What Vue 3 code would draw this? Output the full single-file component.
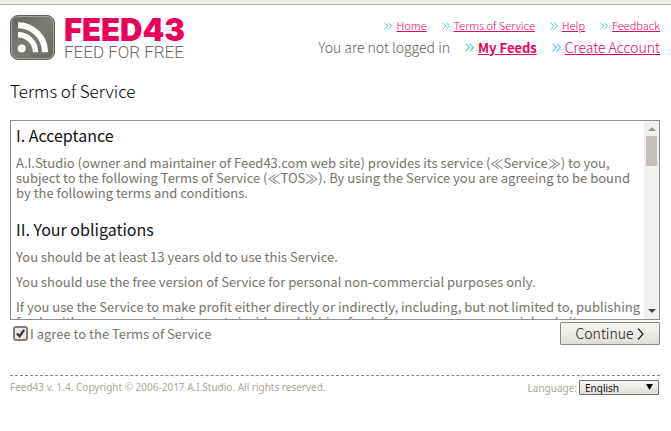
<script setup>
import { ref } from 'vue'

const agreed = ref(true)
const language = ref('English')
const siteLinks = ['Home', 'Terms of Service', 'Help', 'Feedback']
</script>

<template>
  <div class="page">
    <div class="strip"></div>
    <header class="header">
      <a class="logo" href="#" aria-label="Feed43">
        <svg class="logo-icon" width="46" height="46" viewBox="0 0 46 46" aria-hidden="true">
          <defs>
            <linearGradient id="tile" x1="0" y1="0" x2="1" y2="1">
              <stop offset="0" stop-color="#66645e" />
              <stop offset="0.5" stop-color="#7d7b75" />
              <stop offset="1" stop-color="#67655f" />
            </linearGradient>
          </defs>
          <rect x="0.5" y="0.5" width="44" height="44" rx="7.5" fill="url(#tile)" stroke="#64625d" />
          <rect x="1.5" y="1.5" width="42" height="42" rx="6.5" fill="none" stroke="#a3a19c" />
          <circle cx="11.7" cy="33.5" r="4" fill="#fff" />
          <path d="M8 19.7A17.500 17.500 0 0 1 25.500 37.200" fill="none" stroke="#fff" stroke-width="5.400" />
          <path d="M8 10.200A27 27 0 0 1 35 37.200" fill="none" stroke="#fff" stroke-width="6" />
        </svg>
        <span class="logo-text">
          <span class="logo-name">FEED43</span>
          <span class="logo-tag">FEED FOR FREE</span>
        </span>
      </a>
      <nav class="menus">
        <div class="menu small">
          <span v-for="link in siteLinks" :key="link" class="item">
            <svg class="mark" width="8" height="8" viewBox="0 0 8 8" aria-hidden="true"><path d="M0.500 0.500L4 4L0.500 7.500M4 0.500L7.500 4L4 7.500" /></svg>
            <a href="#">{{ link }}</a>
          </span>
        </div>
        <div class="menu account">
          <span>You are not logged in</span>
          <span class="item">
            <svg class="mark" width="9" height="9" viewBox="0 0 8 8" aria-hidden="true"><path d="M0.500 0.500L4 4L0.500 7.500M4 0.500L7.500 4L4 7.500" /></svg>
            <a class="strong" href="#">My Feeds</a>
          </span>
          <span class="item">
            <svg class="mark" width="9" height="9" viewBox="0 0 8 8" aria-hidden="true"><path d="M0.500 0.500L4 4L0.500 7.500M4 0.500L7.500 4L4 7.500" /></svg>
            <a href="#">Create Account</a>
          </span>
        </div>
      </nav>
    </header>

    <main class="main">
      <h1>Terms of Service</h1>
      <form @submit.prevent>
        <div class="terms">
          <div class="terms-text">
            <h2>I. Acceptance</h2>
            <p>
              A.I.Studio (owner and maintainer of Feed43.com web site) provides its service (≪Service≫) to you,<br />
              subject to the following Terms of Service (≪TOS≫). By using the Service you are agreeing to be bound<br />
              by the following terms and conditions.
            </p>
            <h2>II. Your obligations</h2>
            <p>You should be at least 13 years old to use this Service.</p>
            <p>You should use the free version of Service for personal non-commercial purposes only.</p>
            <p>
              If you use the Service to make profit either directly or indirectly, including, but not limited to, publishing<br />
              feeds with your own advertisements inside, publishing feeds for your own commercial website,
            </p>
          </div>
          <div class="scrollbar" aria-hidden="true">
            <svg width="8" height="4" viewBox="0 0 8 4"><path d="M0 4L4 0L8 4Z" fill="#98968f" /></svg>
            <span class="thumb"></span>
            <svg class="down" width="8" height="4" viewBox="0 0 8 4"><path d="M0 0H8L4 4Z" fill="#454545" /></svg>
          </div>
        </div>
        <div class="actions">
          <label class="agree">
            <input v-model="agreed" type="checkbox" />
            <span class="box"><svg v-if="agreed" width="9" height="9" viewBox="0 0 10 10" aria-hidden="true"><path d="M1 5L4 8L9 1" fill="none" stroke="#333" stroke-width="2.500" /></svg></span>
            <span>I agree to the Terms of Service</span>
          </label>
          <button type="submit">Continue
            <svg width="7" height="12" viewBox="0 0 7 12" aria-hidden="true"><path d="M1 0.500L6 6L1 11.500" fill="none" stroke="#222" stroke-width="1.200" /></svg>
          </button>
        </div>
      </form>
    </main>

    <footer class="footer">
      <span class="copyright">Feed43 v. 1.4. Copyright © 2006-2017 A.I.Studio. All rights reserved.</span>
      <div class="language">
        <label for="language">Language:</label>
        <span class="select">
          <select id="language" v-model="language">
            <option>English</option>
          </select>
          <svg width="7" height="6" viewBox="0 0 7 6" aria-hidden="true"><path d="M0 0H7L3.500 6Z" /></svg>
        </span>
      </div>
    </footer>
  </div>
</template>

<style>
body {
  background: #fff;
}
</style>

<style scoped>
.page {
  color: #75736c;
  font: 400 13px/15px "Noto Sans CJK KR", "Noto Sans", sans-serif;
}
.strip {
  height: 4px;
  border-bottom: 1px solid #b5b1aa;
  background: #f1efeb;
}
.header {
  display: flex;
  justify-content: space-between;
  padding: 10px 11px 0 10px;
}
.logo {
  display: flex;
  gap: 8px;
  color: inherit;
  text-decoration: none;
}
.logo-text {
  display: flex;
  flex-direction: column;
  padding-top: 1px;
  white-space: nowrap;
}
.logo-name {
  color: #e8005a;
  font: 900 31px/28px Inter, sans-serif;
}
.logo-tag {
  color: #6b6962;
  font: 300 17px/17px Roboto, sans-serif;
}
.menus {
  display: flex;
  flex-direction: column;
  align-items: flex-end;
  gap: 7px;
  padding-top: 3px;
}
.menu {
  display: flex;
  gap: 15px;
  white-space: nowrap;
}
.small {
  font-size: 11px;
  font-weight: 300;
}
.account {
  color: #5f5d56;
  font-size: 14px;
  font-weight: 300;
}
.item {
  display: flex;
  align-items: center;
  gap: 4px;
}
.mark {
  fill: none;
  stroke: #5bc8c8;
}
.menu a {
  color: #e8005a;
}
.menu .strong {
  font-size: 13px;
  font-weight: 700;
}
.main {
  padding: 0 11px 0 10px;
}
h1 {
  margin: 20px 0 19px;
  color: #000;
  font-size: 17px;
  font-weight: 300;
  line-height: 20px;
}
.terms {
  display: flex;
  height: 198px;
  border: 1px solid #918f87;
  overflow: hidden;
}
.terms-text {
  flex: 1;
  min-width: 0;
  padding: 4px 5px;
  overflow: hidden;
  white-space: nowrap;
}
h2 {
  margin: 0 0 10px;
  color: #111;
  font-size: 16px;
  font-weight: 400;
  line-height: 20px;
}
p {
  margin: 0 0 10px;
}
p + h2 {
  margin-top: 19px;
}
.scrollbar {
  display: flex;
  flex-direction: column;
  align-items: center;
  gap: 5px;
  width: 15px;
  padding: 6px 0;
  background: #f1f0ee;
}
.thumb {
  width: 11px;
  height: 30px;
  background: #c4c0b8;
}
.down {
  margin-top: auto;
}
.actions {
  display: flex;
  justify-content: space-between;
  padding-top: 2px;
}
.agree {
  display: flex;
  align-items: center;
  gap: 2px;
  padding: 0 0 0 3px;
}
.agree input {
  position: absolute;
  opacity: 0;
}
.box {
  display: flex;
  align-items: center;
  justify-content: center;
  box-sizing: border-box;
  width: 15px;
  height: 15px;
  border: 2px solid #817d76;
  border-radius: 3px;
  background: #e9e7e3;
}
button {
  display: flex;
  align-items: center;
  justify-content: center;
  gap: 4px;
  width: 100px;
  height: 23px;
  padding: 0;
  border: 1px solid #8b8880;
  border-radius: 1px;
  background: linear-gradient(#f8f7f6, #dfddd8);
  color: #111;
  font: inherit;
  font-size: 14px;
  font-weight: 300;
}
.footer {
  display: flex;
  justify-content: space-between;
  margin: 30px 11px 0 10px;
  padding-top: 4px;
  border-top: 1px dashed #85837c;
  color: #aaa79c;
  font: 10px/14px "Noto Sans", sans-serif;
}
.language {
  display: flex;
  align-items: center;
  gap: 2px;
}
.select {
  position: relative;
  margin-right: 1px;
}
.select svg {
  position: absolute;
  top: 4px;
  right: 6px;
  pointer-events: none;
}
select {
  display: block;
  width: 80px;
  height: 15px;
  padding: 0 5px;
  appearance: none;
  border: 1px solid #706e67;
  border-radius: 1px;
  background: linear-gradient(#f8f7f6, #e0ded9);
  color: #111;
  font: 10px/12px "Noto Sans", sans-serif;
}
</style>
